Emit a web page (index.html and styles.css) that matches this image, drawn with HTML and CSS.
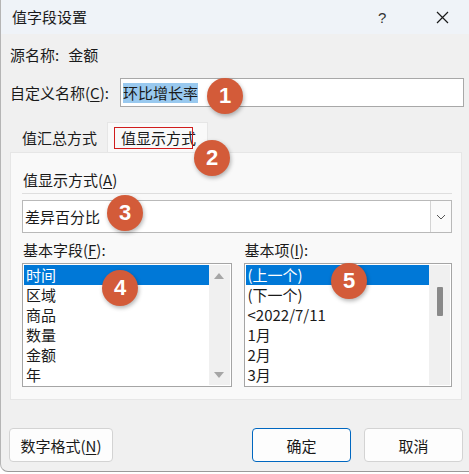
FILE: index.html
```html
<!DOCTYPE html>
<html lang="zh-CN">
<head>
  <meta charset="UTF-8" />
  <title>值字段设置</title>
  <link rel="stylesheet" href="styles.css">
</head>
<body>
  <div class="dialog">
    <div class="titlebar">
      <span class="title">值字段设置</span>
      <span class="help">?</span>
      <span class="close">
        <svg width="13" height="13" viewBox="0 0 13 13"><path d="M1 1 L12 12 M12 1 L1 12" stroke="#1a1a1a" stroke-width="1.2" fill="none"/></svg>
      </span>
    </div>

    <div class="content">
      <div class="source-row">
        <span>源名称:</span>
        <span class="source-val">金额</span>
      </div>

      <div class="name-row">
        <label class="name-label">自定义名称(<u>C</u>):</label>
        <div class="name-input"><span class="selected-text">环比增长率</span></div>
      </div>

      <div class="tabs">
        <div class="tab">值汇总方式</div>
        <div class="tab active">值显示方式</div>
      </div>

      <div class="panel">
        <div class="panel-label">值显示方式(<u>A</u>)</div>
        <div class="separator"></div>
        <div class="combo">
          <span class="combo-text">差异百分比</span>
          <span class="combo-btn">
            <svg width="10" height="6" viewBox="0 0 10 6"><path d="M1 1 L5 5 L9 1" stroke="#555" stroke-width="1" fill="none"/></svg>
          </span>
        </div>

        <div class="lists">
          <div class="list-col">
            <div class="list-label">基本字段(<u>F</u>):</div>
            <div class="listbox">
              <div class="items">
                <div class="item active">时间</div>
                <div class="item">区域</div>
                <div class="item">商品</div>
                <div class="item">数量</div>
                <div class="item">金额</div>
                <div class="item">年</div>
              </div>
              <div class="scrollbar">
                <span class="arrow up"></span>
                <span class="arrow down"></span>
              </div>
            </div>
          </div>
          <div class="list-col">
            <div class="list-label">基本项(<u>I</u>):</div>
            <div class="listbox">
              <div class="items">
                <div class="item active">(上一个)</div>
                <div class="item">(下一个)</div>
                <div class="item">&lt;2022/7/11</div>
                <div class="item">1月</div>
                <div class="item">2月</div>
                <div class="item">3月</div>
              </div>
              <div class="scrollbar">
                <span class="thumb"></span>
              </div>
            </div>
          </div>
        </div>
      </div>

      <div class="buttons">
        <button class="btn btn-format">数字格式(<u>N</u>)</button>
        <div class="spacer"></div>
        <button class="btn btn-ok">确定</button>
        <button class="btn btn-cancel">取消</button>
      </div>
    </div>

    <!-- annotations -->
    <span class="mark"></span>
    <span class="badge b1">1</span>
    <span class="badge b2">2</span>
    <span class="badge b3">3</span>
    <span class="badge b4">4</span>
    <span class="badge b5">5</span>
  </div>
</body>
</html>
```

FILE: styles.css
```css
body { margin: 0; background: #ffffff; font-family: "Noto Sans CJK SC", "Noto Sans", sans-serif; font-size: 15px; color: #1a1a1a; }
u { text-decoration: underline; text-underline-offset: 2px; }

.dialog { position: relative; width: 469px; height: 472px; box-sizing: border-box; background: #f0f0f0; border-left: 1px solid #b5b5b5; border-bottom: 1px solid #9a9a9a; border-radius: 0 0 0 8px; overflow: hidden; }

.titlebar { height: 34px; display: flex; align-items: center; background: #eff3f8; padding-left: 11px; }
.title { flex: 1; line-height: 20px; }
.help { width: 14px; margin-right: 44px; font-family: "Liberation Sans", sans-serif; font-size: 15px; color: #333; }
.close { width: 13px; height: 13px; margin-right: 20px; display: flex; }

.content { padding: 0 0 0 9px; }

.source-row { display: flex; height: 20px; line-height: 20px; margin-top: 11px; }
.source-val { margin-left: 9px; }

.name-row { display: flex; align-items: center; margin-top: 13px; height: 29px; }
.name-label { width: 110px; line-height: 20px; }
.name-input { width: 344px; height: 29px; box-sizing: border-box; border: 1px solid #a8a8a8; background: #fff; padding: 3px 2px; }
.selected-text { background: #99c9ef; line-height: 20px; display: inline-block; height: 20px; }

.tabs { display: flex; margin-top: 15px; height: 30px; }
.tab { box-sizing: border-box; width: 97px; padding-left: 12px; line-height: 31px; white-space: nowrap; }
.tab.active { background: #f9f9f9; border: 1px solid #e6e6e6; border-bottom: none; width: 101px; padding-left: 13px; line-height: 30px; }

.panel { width: 452px; height: 248px; box-sizing: border-box; background: #f9f9f9; border: 1px solid #e6e6e6; padding: 17px 9px 0 11px; }
.panel-label { line-height: 20px; padding-left: 1px; }
.separator { height: 1px; background: #dedede; margin-top: 3px; }
.combo { display: flex; margin-top: 6px; height: 33px; box-sizing: border-box; border: 1px solid #b9b9b9; background: #fff; }
.combo-text { flex: 1; line-height: 31px; padding-left: 2px; }
.combo-btn { width: 20px; border-left: 1px solid #d4d4d4; display: flex; align-items: center; justify-content: center; background: #fafafa; }

.lists { display: flex; gap: 12px; margin-top: 7px; }
.list-col { width: 210px; }
.list-col + .list-col { width: 209px; }
.list-label { line-height: 20px; padding-left: 1px; }
.listbox { display: flex; margin-top: 3px; height: 124px; box-sizing: border-box; border: 1px solid #a5a5a5; background: #fff; padding: 1px; }
.items { flex: 1; }
.item { height: 20px; line-height: 20px; padding-left: 2px; }
.item.active { background: #0078d7; color: #fff; }
.scrollbar { width: 21px; background: #f0f0f0; position: relative; display: flex; flex-direction: column; justify-content: space-between; align-items: center; padding: 8px 0 7px; box-sizing: border-box; }
.arrow { width: 0; height: 0; border-left: 5px solid transparent; border-right: 5px solid transparent; }
.arrow.up { border-bottom: 6px solid #a6a6a6; }
.arrow.down { border-top: 6px solid #a6a6a6; }
.thumb { position: absolute; left: 8px; top: 22px; width: 6px; height: 29px; background: #8a8a8a; border-radius: 1px; }

.buttons { display: flex; margin-top: 28px; padding-right: 6px; }
.spacer { flex: 1; }
.btn { font-family: inherit; font-size: 15px; color: #1a1a1a; height: 34px; background: #fdfdfd; border: 1px solid #d3d3d3; border-radius: 4px; padding: 0; }
.btn-format { width: 104px; margin-left: -1px; }
.btn-ok { width: 99px; border-color: #0067c0; }
.btn-cancel { width: 99px; margin-left: 13px; }

.mark { position: absolute; left: 113px; top: 127px; width: 77px; height: 20px; border: 1px solid #d01c1c; }
.badge { position: absolute; width: 36px; height: 36px; border-radius: 50%; background: #d35b39; color: #fff; font-family: "Liberation Sans", sans-serif; font-weight: bold; font-size: 22px; line-height: 36px; text-align: center; box-shadow: 1px 2px 4px rgba(0,0,0,0.3); }
.b1 { left: 206px; top: 78px; }
.b2 { left: 193px; top: 140px; }
.b3 { left: 106px; top: 195px; }
.b4 { left: 101px; top: 270px; }
.b5 { left: 330px; top: 263px; }
```
